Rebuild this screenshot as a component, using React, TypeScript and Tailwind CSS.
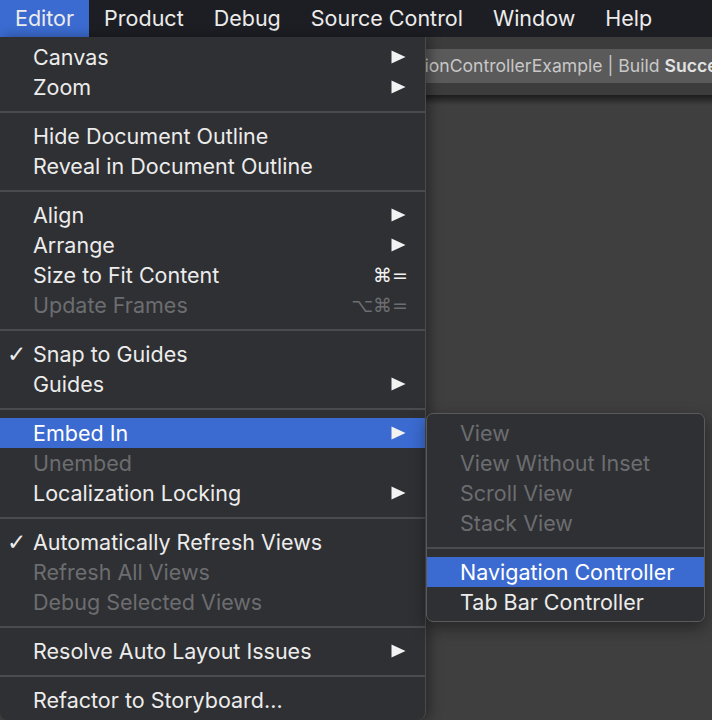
import type { ReactNode } from "react";

type Item =
  | { sep: true }
  | {
      sep?: false;
      label: string;
      disabled?: boolean;
      checked?: boolean;
      submenu?: boolean;
      shortcut?: string;
      active?: boolean;
    };

const mainItems: Item[] = [
  { label: "Canvas", submenu: true },
  { label: "Zoom", submenu: true },
  { sep: true },
  { label: "Hide Document Outline" },
  { label: "Reveal in Document Outline" },
  { sep: true },
  { label: "Align", submenu: true },
  { label: "Arrange", submenu: true },
  { label: "Size to Fit Content", shortcut: "⌘=" },
  { label: "Update Frames", shortcut: "⌥⌘=", disabled: true },
  { sep: true },
  { label: "Snap to Guides", checked: true },
  { label: "Guides", submenu: true },
  { sep: true },
  { label: "Embed In", submenu: true, active: true },
  { label: "Unembed", disabled: true },
  { label: "Localization Locking", submenu: true },
  { sep: true },
  { label: "Automatically Refresh Views", checked: true },
  { label: "Refresh All Views", disabled: true },
  { label: "Debug Selected Views", disabled: true },
  { sep: true },
  { label: "Resolve Auto Layout Issues", submenu: true },
  { sep: true },
  { label: "Refactor to Storyboard..." },
];

const embedItems: Item[] = [
  { label: "View", disabled: true },
  { label: "View Without Inset", disabled: true },
  { label: "Scroll View", disabled: true },
  { label: "Stack View", disabled: true },
  { sep: true },
  { label: "Navigation Controller", active: true },
  { label: "Tab Bar Controller" },
];

function Arrow() {
  return (
    <svg width="15" height="14" viewBox="0 0 15 14" className="shrink-0">
      <path d="M0.5 0.5 L14.5 7 L0.5 13.5 Z" fill="#f2f2f2" />
    </svg>
  );
}

function MenuList({ items }: { items: Item[] }) {
  return (
    <>
      {items.map((it, i) => {
        if (it.sep) {
          return (
            <div key={i} className="h-[19px] flex items-center">
              <div className="h-[2px] w-full bg-[#4a4b4e]" />
            </div>
          );
        }
        const color = it.active
          ? "bg-[#3b6bd0] text-white"
          : it.disabled
            ? "text-[#6c6d70]"
            : "text-[#ececec]";
        return (
          <div key={i} className={`h-[30px] flex items-center ${color}`}>
            <span className="w-[33px] shrink-0 pl-[7px] text-[23px] leading-none font-['DejaVu_Sans',sans-serif]">
              {it.checked ? "✓" : ""}
            </span>
            <span className="flex-1 whitespace-nowrap">{it.label}</span>
            {it.shortcut && (
              <span
                className={`pr-[17px] text-[19px] font-['DejaVu_Sans',sans-serif] ${
                  it.disabled ? "text-[#6c6d70]" : "text-[#f2f2f2]"
                }`}
              >
                {it.shortcut}
              </span>
            )}
            {it.submenu && (
              <span className="pr-[19px]">
                <Arrow />
              </span>
            )}
          </div>
        );
      })}
    </>
  );
}

function BarItem({ children, active }: { children: ReactNode; active?: boolean }) {
  return (
    <div
      className={`h-full flex items-center px-[15px] ${
        active ? "bg-[#3b6bd0]" : ""
      }`}
    >
      {children}
    </div>
  );
}

export default function App() {
  return (
    <div className="relative w-[712px] h-[720px] overflow-hidden bg-[#3f3f3f] flex flex-col font-['Inter','Noto_Sans',sans-serif]">
      {/* Menu bar */}
      <div className="h-[37px] shrink-0 bg-[#1d1e23] flex items-center text-[21.5px] text-[#ececec]">
        <BarItem active>Editor</BarItem>
        <BarItem>Product</BarItem>
        <BarItem>Debug</BarItem>
        <BarItem>Source Control</BarItem>
        <BarItem>Window</BarItem>
        <BarItem>Help</BarItem>
      </div>

      {/* Window toolbar */}
      <div className="shrink-0 bg-[#3c3c3c] pt-[12px] pb-[12px]">
        <div className="ml-[330px] h-[34px] rounded-l-[6px] bg-[#5a5a5a] flex items-center overflow-hidden">
          <span className="pl-[31px] whitespace-nowrap text-[17.6px] text-[#c8c8c8]">
            NavigationControllerExample | Build{" "}
            <b className="font-semibold text-[#e2e2e2]">Succeeded</b>
          </span>
        </div>
      </div>
      <div className="h-[10px] shrink-0 bg-gradient-to-b from-[#1c1c1c] to-[#3f3f3f]" />
      <div className="flex-1 bg-[#3f3f3f]" />

      {/* Editor menu */}
      <div className="absolute left-0 top-[37px] w-[426px] h-[683px] bg-[#2f3033] rounded-b-[8px] border-r border-[#4a4a4c] py-[5px] text-[21.5px] shadow-[4px_0_12px_rgba(0,0,0,0.35)]">
        <MenuList items={mainItems} />
      </div>

      {/* Embed In submenu */}
      <div className="absolute left-[426px] top-[413px] w-[279px] bg-[#2f3033] rounded-[7px] border border-[#5a5a5c] py-[4px] text-[21.5px] overflow-hidden shadow-[0_6px_16px_rgba(0,0,0,0.4)]">
        <MenuList items={embedItems} />
      </div>
    </div>
  );
}
